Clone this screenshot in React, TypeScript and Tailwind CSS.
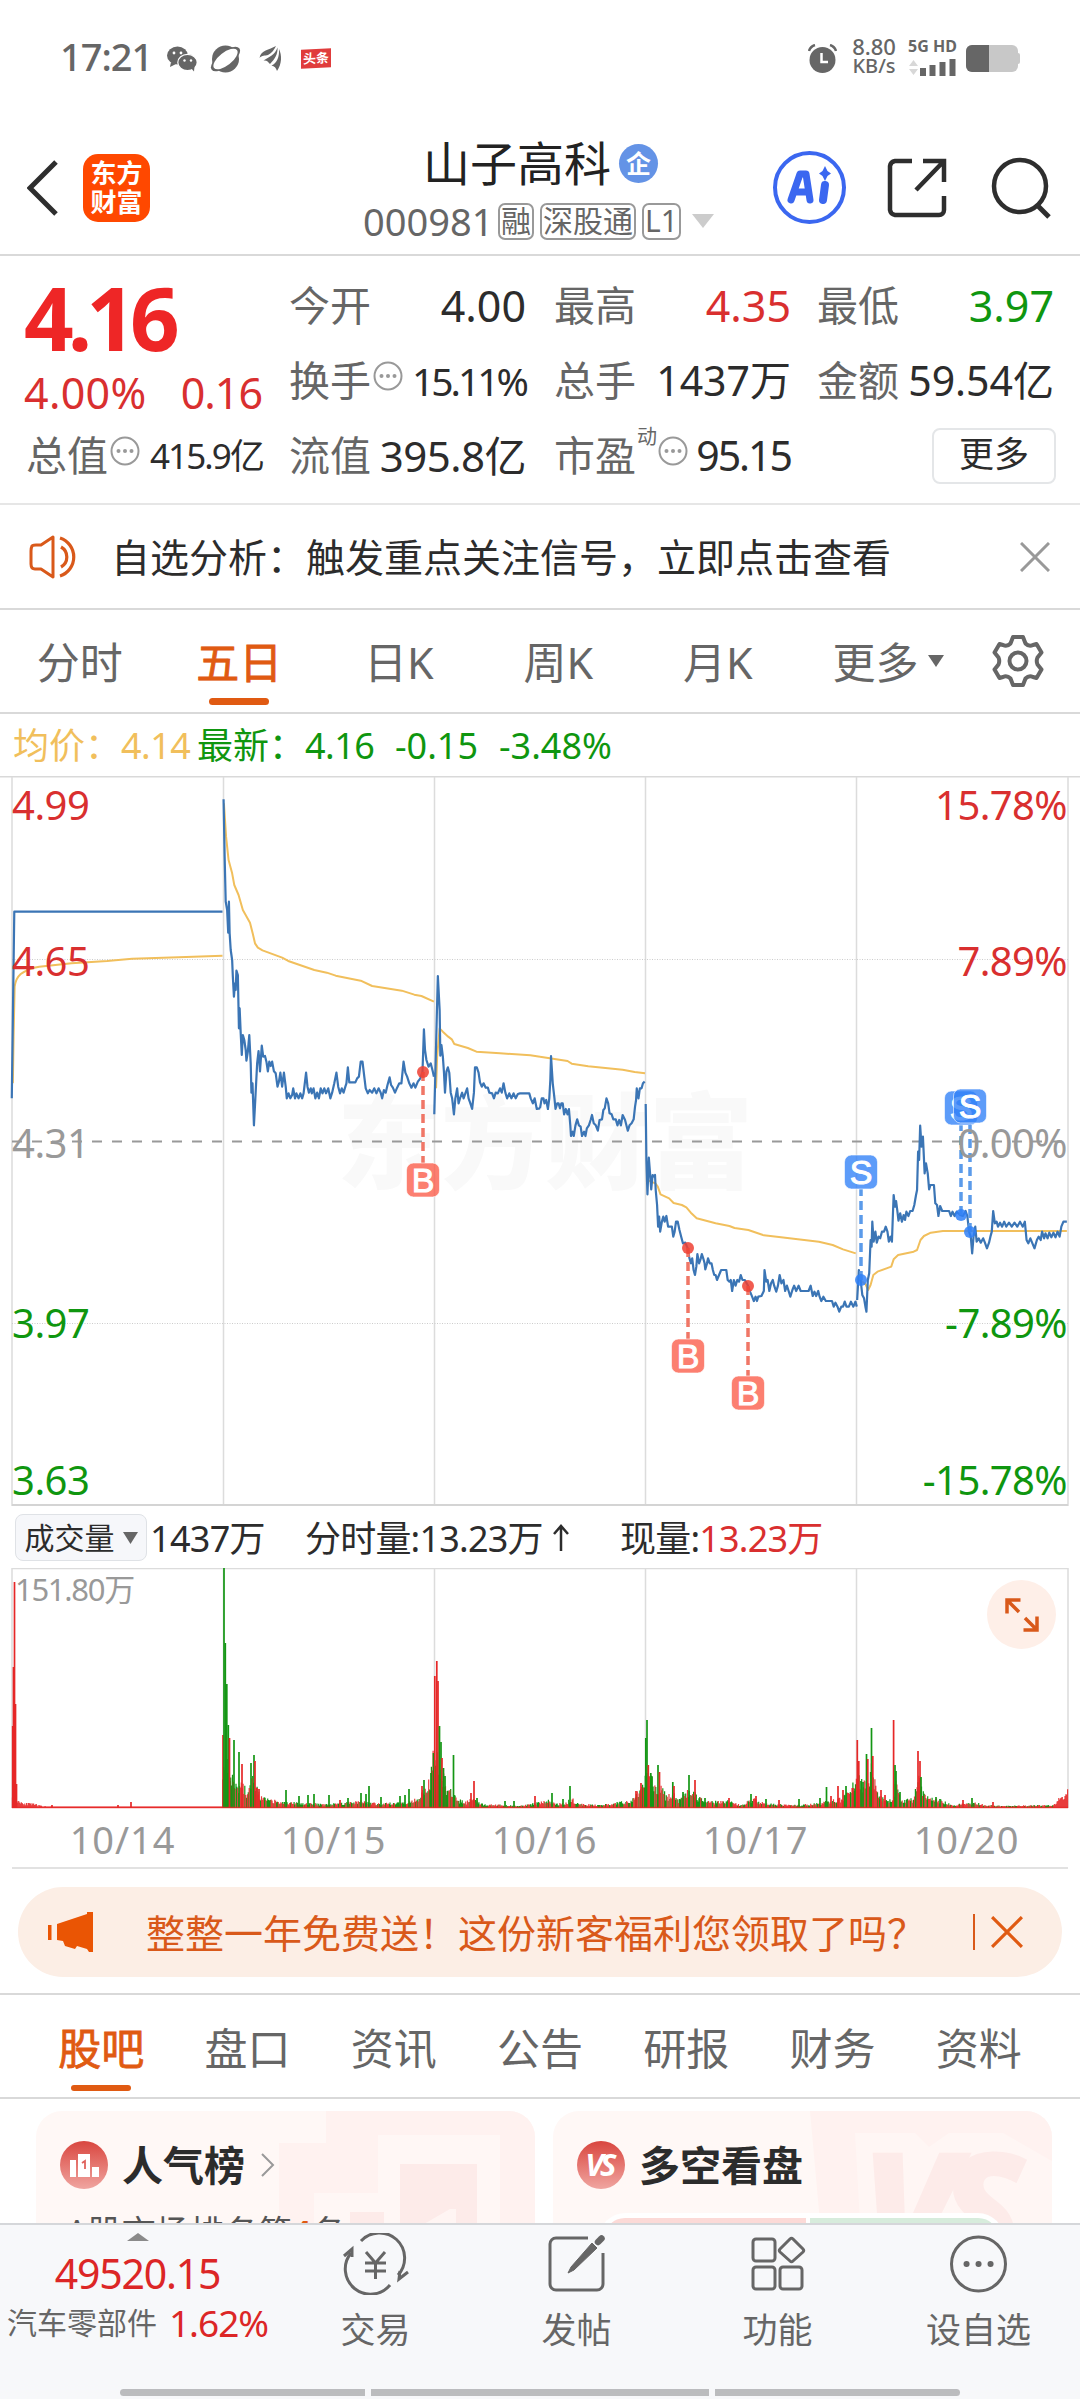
import React from 'react';

type Tone = 'up' | 'down' | 'plain';

const toneClass: Record<Tone, string> = {
    up: 'text-[#d92f2f]',
    down: 'text-[#0f960f]',
    plain: 'text-[#2c2c2c]',
};

/* ---------- Icons ---------- */

const InfoDot = () => (
    <svg width="30" height="30" viewBox="0 0 30 30" className="shrink-0">
        <circle cx="15" cy="15" r="13.5" fill="none" stroke="#999" strokeWidth="2" />
        <circle cx="8.5" cy="15" r="2" fill="#999" />
        <circle cx="15" cy="15" r="2" fill="#999" />
        <circle cx="21.5" cy="15" r="2" fill="#999" />
    </svg>
);

const Triangle = ({ w, h, color, up }: { w: number; h: number; color: string; up?: boolean }) => (
    <svg width={w} height={h} viewBox="0 0 10 10" preserveAspectRatio="none" className="shrink-0">
        <path d={up ? 'M0 10H10L5 0Z' : 'M0 0H10L5 10Z'} fill={color} />
    </svg>
);

const Cross = ({ size, color }: { size: number; color: string }) => (
    <svg width={size} height={size} viewBox="0 0 30 30" className="shrink-0">
        <path d="M1 1L29 29M29 1L1 29" stroke={color} strokeWidth="3" />
    </svg>
);

/* ---------- Status bar ---------- */

const StatusBar = () => (
    <div className="flex h-[117px] items-center pl-[60px] pr-[60px] text-[#666]">
        <span className="-mt-[5px] w-[107px] text-[38px] font-medium leading-none tracking-[-1px]">17:21</span>
        <svg width="30" height="26" viewBox="0 0 30 26">
            <ellipse cx="10.5" cy="9.5" rx="10.5" ry="9" fill="#666" />
            <path d="M4 16L3 21L9 18Z" fill="#666" />
            <ellipse cx="20.5" cy="16.5" rx="9.7" ry="8.2" fill="#666" stroke="#fff" strokeWidth="1.2" />
            <path d="M24 22L27 25.5L27.5 20Z" fill="#666" />
            <circle cx="7" cy="7" r="1.4" fill="#fff" />
            <circle cx="14" cy="7" r="1.4" fill="#fff" />
            <circle cx="17.5" cy="14.5" r="1.2" fill="#fff" />
            <circle cx="24" cy="14.5" r="1.2" fill="#fff" />
        </svg>
        <svg width="32" height="28" viewBox="0 0 32 28" className="ml-[13px]">
            <circle cx="15.5" cy="14" r="13.5" fill="#666" />
            <ellipse cx="15.5" cy="14" rx="17.5" ry="7.5" transform="rotate(-38 15.5 14)" fill="#666" />
            <ellipse cx="15.5" cy="14" rx="14.5" ry="6.5" transform="rotate(-38 15.5 14)" fill="#fff" />
        </svg>
        <svg width="24" height="26" viewBox="0 0 24 26" className="ml-[17px]">
            <path d="M17 0C10 4 2 4 .5 12C3 9 6 10 9 9C13 7 15 4 17 0ZM18.500 1.500C16 9 10 11 4.500 14.500C8 14 9 16 11 18C16 13 19 8 18.500 1.500ZM20 3C20.500 11 18 17 12.500 19.500C15.500 20 17 22 18 25C23 18 23 9 20 3Z" fill="#666" />
        </svg>
        <span className="ml-[18px] flex h-[19px] w-[30px] -skew-y-3 items-center justify-center bg-[#e03c3c] text-[13px] font-bold leading-none text-white">头条</span>

        <svg width="29" height="30" viewBox="0 0 29 30" className="ml-auto">
            <circle cx="14.5" cy="16" r="13" fill="#666" />
            <path d="M1 7A9 9 0 0 1 7 1M28 7A9 9 0 0 0 22 1" stroke="#666" strokeWidth="2.5" fill="none" />
            <path d="M13.5 9V18H20" stroke="#fff" strokeWidth="2.5" fill="none" />
        </svg>
        <div className="-mt-[6px] ml-[11px] flex w-[52px] flex-col items-center text-[22px] font-medium leading-[19px]">
            <span>8.80</span>
            <span className="text-[20px]">KB/s</span>
        </div>
        <div className="-mt-[4px] ml-[8px] flex w-[50px] flex-col">
            <span className="whitespace-nowrap text-[16px] font-bold leading-[16px]">5G HD</span>
            <svg width="50" height="18" viewBox="0 0 50 18" className="mt-[4px]">
                <path d="M1 8L5.5 2L10 8ZM1 11L5.5 17L10 11Z" fill="#d8d8d8" />
                <path d="M15 10V18M24.5 7V18M34.5 4V18M44.5 1V18" stroke="#666" strokeWidth="6" />
            </svg>
        </div>
        <svg width="54" height="27" viewBox="0 0 54 27" className="ml-[8px]">
            <rect width="52" height="27" rx="6" fill="#c8c8c8" />
            <rect x="50" y="8" width="4" height="11" rx="2" fill="#c8c8c8" />
            <path d="M6 0H23V27H6A6 6 0 0 1 0 21V6A6 6 0 0 1 6 0Z" fill="#666" />
        </svg>
    </div>
);

/* ---------- Header ---------- */

const Tag = ({ children }: { children: React.ReactNode }) => (
    <span className="flex h-[37px] items-center rounded-[7px] border-2 border-[#999] px-[1px] text-[30px] leading-none">{children}</span>
);

const Header = () => (
    <div className="flex h-[139px] items-center border-b-2 border-[#d9d9d9] pl-[27px] pr-[29px]">
        <svg width="32" height="56" viewBox="0 0 32 56" className="mt-[4px]">
            <path d="M29 2L3 28L29 54" fill="none" stroke="#2e2e2e" strokeWidth="5" />
        </svg>
        <div className="ml-[24px] mt-[4px] flex h-[68px] w-[67px] flex-col items-center justify-center rounded-[15px] bg-[#ff4800] text-[26px] font-bold leading-[29px] text-white">
            <span>东方</span>
            <span>财富</span>
        </div>
        <div className="ml-[213px] mt-[13px] flex w-[351px] flex-col">
            <div className="ml-[60px] flex h-[46px] items-center gap-[8px]">
                <span className="whitespace-nowrap text-[47px] leading-none text-[#222]">山子高科</span>
                <span className="flex h-[39px] w-[39px] items-center justify-center rounded-full bg-[#6493e6] text-[25px] font-bold leading-none text-white">企</span>
            </div>
            <div className="mt-[12px] flex h-[46px] items-center gap-[6px] whitespace-nowrap text-[#666]">
                <span className="w-[129px] text-[38px] leading-none">000981</span>
                <Tag>融</Tag>
                <Tag>深股通</Tag>
                <Tag>L1</Tag>
                <span className="ml-[5px]"><Triangle w={22} h={14} color="#ccc" /></span>
            </div>
        </div>
        <div className="ml-auto mt-[4px] flex items-center">
            <svg width="73" height="73" viewBox="0 0 73 73">
                <circle cx="36.5" cy="36.5" r="34.5" fill="none" stroke="#3b67f0" strokeWidth="4" />
                <path d="M18 49L27 23H33L37 49M22 41H35" fill="none" stroke="#3b67f0" strokeWidth="7" strokeLinecap="round" strokeLinejoin="round" />
                <path d="M52 34L50 49" stroke="#3b67f0" strokeWidth="8" strokeLinecap="round" />
                <path d="M52 15L54.5 20L58 22.5L54.5 25L52 30L49.5 25L46 22.5L49.5 20Z" fill="#3b67f0" />
            </svg>
            <svg width="60" height="60" viewBox="0 0 60 60" className="ml-[41px]">
                <path d="M25 3H8A6 6 0 0 0 3 8V52A6 6 0 0 0 8 57H52A5 5 0 0 0 57 52V38" fill="none" stroke="#2e2e2e" strokeWidth="4.5" />
                <path d="M36 3H57V24M57 3L29 32" fill="none" stroke="#2e2e2e" strokeWidth="4.5" />
            </svg>
            <svg width="60" height="62" viewBox="0 0 60 62" className="ml-[44px]">
                <circle cx="29" cy="29" r="26" fill="none" stroke="#2e2e2e" strokeWidth="4.5" />
                <path d="M46 48L58 60" stroke="#2e2e2e" strokeWidth="5" />
            </svg>
        </div>
    </div>
);

/* ---------- Quote board ---------- */

interface QuoteProps {
    label: string;
    value: string;
    tone?: Tone;
    info?: boolean;
    sup?: string;
    size?: string;
}

const Quote = ({ label, value, tone = 'plain', info, sup, size = 'text-[43px]' }: QuoteProps) => (
    <div className="flex h-[75px] w-[237px] items-center whitespace-nowrap">
        <span className="text-[41px] leading-none text-[#666]">{label}</span>
        {sup && <span className="-mr-[1px] -mt-[38px] ml-[1px] text-[20px] leading-none text-[#666]">{sup}</span>}
        {info && <span className="-mt-[10px] ml-[2px] flex"><InfoDot /></span>}
        <span className={`ml-auto leading-none ${size} ${toneClass[tone]}`}>{value}</span>
    </div>
);

const QuoteBoard = () => (
    <div className="flex h-[249px] border-b-2 border-[#e6e6e6] pl-[26px] pt-[12px]">
        <div className="w-[263px]">
            <div className="-ml-[2px] flex h-[99px] items-center text-[87px] font-bold leading-none tracking-[-6px] text-[#ee2626]">4.16</div>
            <div className="-ml-[2px] flex h-[51px] w-[238px] items-center justify-between text-[43px] leading-none tracking-[-1px] text-[#d92f2f]">
                <span className="tracking-[0.3px]">4.00%</span>
                <span>0.16</span>
            </div>
            <Quote label="总值" value="415.9亿" info size="text-[35px] tracking-[-1.9px]" />
        </div>
        <div className="w-[265px]">
            <Quote label="今开" value="4.00" />
            <Quote label="换手" value="15.11%" info size="text-[39px] tracking-[-3px]" />
            <Quote label="流值" value="395.8亿" size="text-[42px] tracking-[-0.5px]" />
        </div>
        <div className="w-[263px]">
            <Quote label="最高" value="4.35" tone="up" />
            <Quote label="总手" value="1437万" size="text-[41px]" />
            <Quote label="市盈" value="95.15" info sup="动" size="text-[41px] tracking-[-2px]" />
        </div>
        <div>
            <Quote label="最低" value="3.97" tone="down" />
            <Quote label="金额" value="59.54亿" size="text-[41px]" />
            <div className="flex h-[75px] w-[239px] items-center justify-end">
                <button className="h-[56px] w-[124px] rounded-[8px] border-2 border-[#e4e6e8] pb-[4px] text-[35px] leading-none text-[#2c2c2c]">更多</button>
            </div>
        </div>
    </div>
);

const Notice = () => (
    <div className="flex h-[105px] items-center border-b-2 border-[#d9d9d9] pl-[29px] pr-[30px]">
        <svg width="53" height="44" viewBox="0 0 53 44">
            <path d="M3 11Q2 13 2 16V29Q2 34 6 34H12L24 42V2L12 10H7Q3 10 3 11Z" fill="none" stroke="#d9591a" strokeWidth="3" strokeLinejoin="round" />
            <path d="M32 12A11.5 11.5 0 0 1 32 32M31 3A20 20 0 0 1 31 41" fill="none" stroke="#d9591a" strokeWidth="3.2" />
        </svg>
        <span className="ml-[29px] text-[39px] leading-none text-[#2c2c2c]">自选分析：触发重点关注信号，立即点击查看</span>
        <span className="ml-auto"><Cross size={30} color="#999" /></span>
    </div>
);

/* ---------- Period tabs ---------- */

const periods = ['分时', '五日', '日K', '周K', '月K'];

const PeriodTabs = () => (
    <div className="flex h-[104px] items-center border-b-2 border-[#d9d9d9]">
        {periods.map((p) => (
            <div key={p} className={`relative flex h-full w-[159.5px] items-center justify-center pt-[3px] text-[43px] leading-none ${p === '五日' ? 'text-[#e05a12] [-webkit-text-stroke:0.8px]' : 'text-[#666]'}`}>
                {p}
                {p === '五日' && <span className="absolute bottom-[7px] h-[7px] w-[60px] rounded-full bg-[#e05a12]" />}
            </div>
        ))}
        <div className="ml-[35px] flex items-center gap-[9px] pt-[3px] text-[43px] leading-none text-[#666]">
            更多
            <span className="-mt-[4px] flex"><Triangle w={16} h={12} color="#666" /></span>
        </div>
        <svg width="54" height="54" viewBox="0 0 54 54" className="ml-[47px]">
            <path d="M22 3H32L34.5 9.5Q38 13 42 11L45.5 10L50.5 18.5L46.5 23.5Q45 27 46.5 30.5L50.5 35.5L45.5 44L42 43Q38 41 34.5 44.5L32 51H22L19.5 44.5Q16 41 12 43L8.5 44L3.5 35.5L7.5 30.5Q9 27 7.5 23.5L3.5 18.5L8.5 10L12 11Q16 13 19.5 9.5Z" fill="none" stroke="#666" strokeWidth="4" strokeLinejoin="round" />
            <circle cx="27" cy="27" r="8.5" fill="none" stroke="#666" strokeWidth="4" />
        </svg>
    </div>
);

/* ---------- Price chart ---------- */

// Curves are stored in fine integer units, each group is scaled down to the plot.
const PRICE_A =
    'M33 985L40 425H623' +
    'M626 88L629 260 632 395 636 420 639 488 641 395 643 490 646 540 650 570 652 620 655 680 658 640 660 660 662 602 666 615 669 775 671 715 674 790 677 855 680 795 684 810 688 840 690 872 694 845 698 795 702 880 704 968 707 940 711 1066 715 985 720 880 724 843 728 904 733 827 737 860 742 858 746 875 750 904 754 875 758 888 762 875 767 904 772 910 777 950 781 935 785 908 790 950 795 908 800 950 803 985 808 970 813 985 818 975 821 955 826 985 830 970 836 985 841 970 846 985 850 970 857 908 861 950 865 968 870 955 873 970 878 955 883 985 888 968 893 985 898 955 903 970 908 955 913 970 919 955 925 985 930 968 936 940 942 908 947 950 952 970 957 955 962 968 967 950 970 940 974 892 978 937 995 937 1000 925 1005 920 1010 875 1015 875 1020 920 1024 955 1030 970 1035 960 1042 968 1048 955 1054 970 1060 955 1066 968 1070 985 1075 960 1080 968 1085 945 1091 922 1095 945 1100 953 1106 968 1112 953 1118 940 1124 940 1130 875 1135 908 1140 920 1146 940 1152 953 1158 940 1163 953 1170 935 1177 925 1183 905 1187 778 1190 840 1194 870 1200 890 1206 880 1212 905 1215 920' +
    'M1216 1033L1220 870 1223 740 1226 618 1231 720 1233 857 1236 825 1240 860 1243 905 1246 968 1250 905 1254 892 1258 908 1262 968 1266 985 1271 1033 1275 985 1280 955 1284 1000 1288 985 1294 968 1298 985 1303 970 1308 955 1312 985 1317 1000 1322 1017 1327 968 1330 892 1335 892 1340 908 1344 937 1349 950 1354 940 1360 953 1366 953 1370 968 1378 970 1383 985 1388 968 1394 970 1400 955 1405 968 1410 940 1415 968 1420 985 1426 970 1432 985 1438 970 1444 985 1450 972 1456 970H1482L1486 985 1492 1000 1497 985 1503 1017 1512 1015';
const PRICE_B =
    'M0 1015L5 985 10 985 13 1000 18 990 23 1017 27 985 30 930 32 858 37 940 42 985 45 1017 50 1000 54 1000 58 1015 62 1000 66 1000 70 1033 75 1017 80 1033 84 1017 88 1066 90 1098 95 1085 98 1098 103 1066 108 1048 113 1066 118 1070 122 1098 128 1085 132 1098 136 1075 142 1066 147 1050 151 1035 156 1060 162 1066 168 1082 173 1050 180 1048 184 1020 188 1015 193 985 198 1000 202 1030 208 1033 213 1048 220 1048 225 1066 230 1050 235 1066 240 1035 247 1050 255 1082 260 1066 266 1060 272 1048 276 1010 279 990 281 955 286 985 290 955 295 955 299 940 304 935';
const PRICE_C =
    'M307 72L309 240 312 343 314 290 316 233 320 285 323 328 327 285 331 290 334 285 336 330 340 375 343 440 346 410 349 455 354 425 358 410 362 425 367 408 372 440 378 440 383 440 387 470 391 455 395 425 400 425 405 450 410 470 415 490 422 488 429 505 434 535 438 550 442 535 446 570 450 585 454 560 457 522 462 550 467 535 470 522 474 535 478 550 480 568 485 550 488 535 493 550 498 550 502 570 506 585 510 585 514 600 520 585 526 570 541 570 545 600 550 605 554 600 558 633 563 600 568 617 573 600 578 605 583 585 588 600 595 600 603 615 610 635 616 650 621 663 626 650 630 663 634 650 643 648 650 633 652 570 657 605 661 600 666 633 671 610 676 600 680 617 686 635 691 617 696 585 701 610 707 600 712 633 717 617 722 633 727 650 733 630 738 617 744 633 751 617 757 633 780 633 786 617 792 648 797 635 802 648 808 633 812 650 817 663 823 650 830 663H848L853 680 858 668 864 680 869 695 875 680 880 680 885 665 890 680 897 680 903 665 910 680 916 665 920 680' +
    'M921 660L926 570 931 600 936 645 941 655 945 680 948 695 952 600 956 580 960 480 963 500 965 425 969 485 974 455 978 488 983 470 988 475 993 455 999 455 1004 440 1009 455 1013 485 1018 470 1022 485 1025 400 1027 345 1031 380 1034 363 1038 395 1041 422 1046 400 1051 425 1056 405 1060 420 1064 395 1070 408 1075 393 1082 393 1087 375 1092 345 1095 330 1098 215 1101 240 1104 137 1108 200 1112 170 1117 280 1121 250 1126 280 1130 328 1134 315 1144 315 1148 370 1153 375 1157 408 1162 378 1168 393 1188 393 1193 408 1198 395 1204 408 1210 395 1220 405 1228 408 1236 393 1241 408 1246 455 1251 470 1255 520 1259 470 1264 440 1268 485 1274 475 1280 488 1287 475 1292 488 1298 505 1304 488 1308 470 1312 455 1316 393 1321 430 1326 425 1330 440 1336 428 1342 440 1348 425 1354 440 1362 428 1370 440 1378 428 1386 440 1394 425 1402 440 1408 425 1413 480 1418 490 1424 475 1430 490 1436 505 1443 480 1448 470 1454 480 1458 455 1464 475 1468 460 1474 475 1479 458 1485 472 1491 458 1497 472 1503 455 1509 470 1514 440 1520 425H1530';
const AVG_A =
    'M36 940L38 800 41 650Q44 625 58 612 80 595 110 590L200 580 300 573 370 566 500 562 623 557' +
    'M627 100L633 200 640 270 650 310 656 345 668 375 680 420 700 458 708 492 714 520 722 533 735 541 790 563 807 573 880 600 915 608 940 617 1010 632 1042 648 1125 662 1160 674 1180 678 1215 695' +
    'M1221 955L1224 860 1231 775 1240 785 1255 800 1265 808 1272 822 1310 834 1334 845 1400 850 1485 856 1512 860';
const AVG_B = 'M0 860L80 873 92 881 140 889 240 899 275 906 305 910';
const AVG_C =
    'M310 300L335 310 342 320 350 343 375 355 388 369 412 375 425 382 438 398 455 415 510 430 550 438 565 444 605 450 650 466 700 472 810 485 850 495 880 508 917 520' +
    'M921 600L926 590 935 605 945 612 953 630 960 615 968 585 980 575 1020 560 1027 538 1040 525 1085 515 1095 510 1105 480 1115 468 1135 458 1170 453H1530';

const GROUPS = [
    { transform: 'translate(0 -6) scale(.35714 .33333)', price: PRICE_A, avg: AVG_A },
    { transform: 'translate(540 -6) scale(.34435 .33333)', price: PRICE_B, avg: AVG_B },
    { transform: 'translate(540 304) scale(.34435 .33333)', price: PRICE_C, avg: AVG_C },
];

interface Marker {
    kind: 'B' | 'S';
    x: number;
    dot: number;
    box: number;
    boxX?: number;
}

const markers: Marker[] = [
    { kind: 'B', x: 423, dot: 296, box: 404 },
    { kind: 'B', x: 688, dot: 472, box: 580 },
    { kind: 'B', x: 748, dot: 510, box: 617 },
    { kind: 'S', x: 861, dot: 504, box: 396 },
    { kind: 'S', x: 961, dot: 439, box: 332 },
    { kind: 'S', x: 970, dot: 456, box: 330 },
];

const DAY_X = [223.5, 434.5, 645.5, 856.5];

const MarkerMark = ({ kind, x, dot, box }: Marker) => {
    const fill = kind === 'B' ? '#fb5b48' : '#2f80f7';
    return (
        <g>
            <path d={`M${x} ${dot}V${kind === 'B' ? box - 17 : box + 17}`} stroke={kind === 'B' ? '#f07666' : '#5b9bea'} strokeWidth="3.5" strokeDasharray="9 5" />
            <circle cx={x} cy={dot} r="6" fill={kind === 'B' ? '#ee3f33' : '#2f80f7'} fillOpacity="0.85" />
            <rect x={x - 16.5} y={box - 17} width="33" height="34" rx="7" fill={fill} fillOpacity="0.78" stroke="#fff" strokeOpacity="0.6" />
            <text x={x} y={box + 12} textAnchor="middle" fontSize="34" stroke="#fff" strokeWidth="1" fill="#fff" className="font-['Liberation_Sans',sans-serif]">{kind}</text>
        </g>
    );
};

const leftAxis: [string, string, number][] = [
    ['4.99', '#d92f2f', 44],
    ['4.65', '#d92f2f', 200],
    ['4.31', '#999', 382],
    ['3.97', '#0f960f', 562],
    ['3.63', '#0f960f', 719],
];
const rightAxis: [string, string, number][] = [
    ['15.78%', '#d92f2f', 44],
    ['7.89%', '#d92f2f', 200],
    ['0.00%', '#999', 382],
    ['-7.89%', '#0f960f', 562],
    ['-15.78%', '#0f960f', 719],
];

const PriceChart = () => (
    <svg width="1080" height="731" viewBox="0 0 1080 731" className="block font-['Noto_Sans','Noto_Sans_CJK_SC',sans-serif]">
        <text x="337" y="405" fontSize="104" fontWeight="900" fill="#f9f9f9">东方财富</text>
        <path d="M0 .75H1080" stroke="#d9d9d9" strokeWidth="1.5" />
        <path d={`M12 1V730M1068 1V730${DAY_X.map((x) => `M${x} 1V730`).join('')}`} stroke="#dcdcdc" strokeWidth="1.5" />
        <path d="M12 729H1068" stroke="#d4d4d4" strokeWidth="2" />
        <path d="M12 183.5H1068M12 547.5H1068" stroke="#ccc" strokeDasharray="1 1.5" />
        <path d="M12 365.5H1068" stroke="#999" strokeWidth="2" strokeDasharray="10 10" />
        {GROUPS.map((g) => (
            <g key={g.transform} transform={g.transform} fill="none" strokeLinejoin="round">
                <path d={g.avg} stroke="#f1bf5c" strokeWidth="2" vectorEffect="non-scaling-stroke" />
                <path d={g.price} stroke="#3b75b5" strokeWidth="2.2" vectorEffect="non-scaling-stroke" />
            </g>
        ))}
        {markers.map((m) => <MarkerMark key={m.x} {...m} />)}
        {leftAxis.map(([t, c, y]) => <text key={t} x="12" y={y} fontSize="40" letterSpacing="-0.5" fill={c}>{t}</text>)}
        {rightAxis.map(([t, c, y]) => <text key={t} x="1067" y={y} fontSize="40" letterSpacing="-0.6" textAnchor="end" fill={c}>{t}</text>)}
    </svg>
);

/* ---------- Volume chart ---------- */

const RED = '#e62727';
const GREEN = '#149614';

// [x, height] control points of the ordinary turnover level
const floor: [number, number][] = [
    [12, 20], [18, 8], [24, 5], [34, 4], [42, 2], [60, 1], [222, 1], [223, 55], [230, 36], [236, 28], [244, 22], [248, 14], [252, 32], [256, 22],
    [260, 12], [266, 9], [280, 6], [300, 5], [330, 4], [360, 7], [380, 4], [405, 6], [418, 10], [423, 20], [430, 26], [434, 60], [440, 50],
    [446, 22], [452, 15], [460, 8], [466, 6], [474, 11], [482, 4], [520, 2], [536, 5], [550, 8], [556, 4], [566, 5], [572, 10], [578, 4], [600, 3], [622, 6],
    [634, 9], [640, 20], [645, 30], [650, 32], [656, 22], [660, 26], [666, 12], [674, 15], [678, 7], [688, 18], [696, 14], [704, 6], [730, 7], [740, 3],
    [754, 9], [766, 4], [800, 3], [820, 5], [840, 9], [850, 16], [856, 32], [862, 26], [867, 34], [872, 40], [878, 13], [892, 8], [896, 26], [901, 7],
    [914, 9], [918, 38], [922, 20], [928, 10], [944, 7], [954, 3], [974, 6], [985, 3], [1004, 2], [1054, 3], [1058, 8], [1068, 20],
];

const spikes: [number, number, 'r' | 'g'][] = [
    [12.7, 82, 'r'], [13.5, 141, 'r'], [14.5, 226, 'r'], [15.5, 104, 'r'], [16.5, 24, 'r'], [52, 3, 'r'], [118, 3, 'r'], [131, 6, 'r'],
    [223, 73, 'r'], [224, 240, 'g'], [225.3, 165, 'g'], [226.8, 124, 'g'], [228.3, 83, 'g'], [229.5, 70, 'r'], [234, 68, 'g'], [239, 56, 'g'], [242, 44, 'r'],
    [251, 45, 'g'], [254, 53, 'g'], [255, 47, 'r'], [257, 20, 'r'], [259, 19, 'r'], [286, 18, 'g'], [299, 12, 'g'], [308, 13, 'g'], [314, 14, 'g'],
    [329, 13, 'g'], [340, 8, 'r'], [348, 10, 'g'], [361, 15, 'g'], [366, 14, 'g'], [369, 22, 'g'], [381, 11, 'g'], [400, 12, 'g'], [405, 13, 'g'], [409, 19, 'g'],
    [422, 22, 'r'], [424, 28, 'g'], [431, 35, 'g'], [433.5, 55, 'g'], [434.8, 132, 'r'], [436.8, 147, 'r'], [438, 127, 'r'], [439.5, 82, 'g'], [441, 66, 'g'],
    [442, 50, 'r'], [443.5, 40, 'g'], [445, 32, 'g'], [453.5, 53, 'g'], [471, 15, 'r'], [474, 27, 'r'], [477, 10, 'g'], [505, 7, 'g'], [514, 7, 'g'], [535, 12, 'r'],
    [552, 15, 'g'], [563, 9, 'g'], [570, 22, 'g'], [636, 17, 'r'], [641, 25, 'r'], [645.8, 70, 'g'], [647, 88, 'g'], [648.3, 43, 'r'], [650.8, 35, 'g'],
    [658, 43, 'g'], [659.5, 36, 'r'], [672.8, 26, 'g'], [674, 22, 'r'], [683, 16, 'g'], [689, 33, 'g'], [695, 28, 'r'], [705, 10, 'g'], [729, 10, 'r'],
    [751, 14, 'g'], [756, 12, 'r'], [766, 9, 'g'], [779, 8, 'r'], [799, 9, 'g'], [820, 10, 'g'], [826.5, 21, 'g'], [831, 12, 'r'], [838, 22, 'r'], [843, 18, 'r'],
    [846, 22, 'g'], [853, 20, 'r'], [857.3, 68, 'r'], [858.8, 47, 'r'], [861, 27, 'g'], [863, 26, 'g'], [866.5, 54, 'g'], [867.8, 49, 'r'], [871.5, 80, 'g'],
    [872.8, 52, 'r'], [881, 18, 'r'], [885, 13, 'r'], [893.6, 88, 'r'], [895, 43, 'g'], [896, 37, 'g'], [900, 16, 'g'], [918, 57, 'r'], [920, 47, 'r'],
    [921, 31, 'g'], [936, 11, 'g'], [940, 9, 'g'], [963, 8, 'r'], [972, 10, 'g'], [993, 6, 'r'],
];

const level = (x: number) => {
    let i = 1;
    while (i < floor.length - 1 && floor[i][0] < x) i++;
    const [x0, h0] = floor[i - 1];
    const [x1, h1] = floor[i];
    return h0 + ((h1 - h0) * (x - x0)) / (x1 - x0);
};

const buildBars = () => {
    let seed = 11;
    let red = '';
    let green = '';
    for (let x = 12.5; x < 1068; x += 0.88) {
        seed = (seed * 16807) % 2147483647;
        const a = seed / 2147483647;
        seed = (seed * 16807) % 2147483647;
        const b = seed / 2147483647;
        const h = Math.max(1.5, level(x) * (0.55 + a * 0.6));
        const bar = `M${x.toFixed(1)} 240V${(240 - h).toFixed(1)}`;
        if (x < 222 || x > 1054 || b > 0.5) red += bar;
        else green += bar;
    }
    return { red, green };
};

const VolumeChart = () => {
    const bars = buildBars();
    return (
        <div className="relative h-[241px]">
            <svg width="1080" height="241" viewBox="0 0 1080 241" className="block font-['Noto_Sans','Noto_Sans_CJK_SC',sans-serif]">
                <path d={`M12 .5H1068M12 0V240M1068 0V240${DAY_X.map((x) => `M${x} 0V240`).join('')}`} stroke="#dcdcdc" strokeWidth="1.5" fill="none" />
                <text x="15" y="33" fontSize="31" letterSpacing="-1.3" fill="#999">151.80万</text>
                <path d={bars.green} stroke={GREEN} strokeWidth="1.2" />
                <path d={bars.red} stroke={RED} strokeWidth="1.2" strokeOpacity="0.9" />
                {spikes.map(([x, h, c], i) => (
                    <path key={i} d={`M${x} 240V${240 - h}`} stroke={c === 'r' ? RED : GREEN} strokeWidth="1.7" />
                ))}
                <path d="M12 239.5H1068" stroke={RED} strokeWidth="1.5" strokeOpacity="0.8" />
            </svg>
            <span className="absolute left-[987px] top-[12px] flex h-[69px] w-[69px] items-center justify-center rounded-full bg-[#feefe8]">
                <svg width="34" height="34" viewBox="0 0 34 34">
                    <path d="M2 15.5V2H15.5M2 2L14 14M32 18.5V32H18.5M32 32L20 20" fill="none" stroke="#d9591a" strokeWidth="3.5" />
                </svg>
            </span>
        </div>
    );
};

const dates = ['10/14', '10/15', '10/16', '10/17', '10/20'];

const ChartPanel = () => (
    <div>
        <div className="flex h-[62px] items-center whitespace-nowrap pl-[13px] pt-[2px] text-[36px] leading-none">
            <span className="w-[184px] text-[#f1bf5c]">均价：<span className="tracking-[-0.5px]">4.14</span></span>
            <span className="flex text-[#0f960f]">
                <span className="w-[198px]">最新：<span className="tracking-[-0.5px]">4.16</span></span>
                <span className="w-[104px]">-0.15</span>
                <span>-3.48%</span>
            </span>
        </div>
        <PriceChart />
        <div className="flex h-[61px] items-center whitespace-nowrap pl-[15px] text-[36px] leading-none text-[#2c2c2c]">
            <span className="flex h-[47px] w-[132px] items-center justify-center gap-[8px] rounded-[8px] border border-[#dfe2e6] bg-[#f6f7fa] text-[30px]">
                成交量
                <Triangle w={15} h={12} color="#666" />
            </span>
            <span className="ml-[3px] w-[155px] pt-[2px] tracking-[-0.7px]">1437万</span>
            <span className="w-[246px] pt-[2px] tracking-[-0.8px]">分时量:13.23万</span>
            <svg width="16" height="28" viewBox="0 0 16 28" className="ml-[2px]">
                <path d="M8 27V2M1 10L8 2L15 10" fill="none" stroke="#2c2c2c" strokeWidth="2.5" />
            </svg>
            <span className="ml-[51px] pt-[2px] tracking-[-0.8px]">现量:<span className="text-[#d92f2f]">13.23万</span></span>
        </div>
        <VolumeChart />
        <div className="mx-[12px] flex h-[60px] items-center border-b-2 border-[#e2e2e2] pl-[5px] pt-[2px]">
            {dates.map((d) => (
                <span key={d} className="w-[211px] shrink-0 text-center text-[38px] leading-none tracking-[0.9px] text-[#999]">{d}</span>
            ))}
        </div>
    </div>
);

/* ---------- Promo + info tabs ---------- */

const Promo = () => (
    <div className="h-[126px] border-b-2 border-[#d9d9d9] px-[18px] pt-[18px]">
        <div className="flex h-[90px] items-center rounded-[45px] bg-[#fceee5] pl-[29px] pr-[39px]">
            <svg width="47" height="40" viewBox="0 0 47 40">
                <path d="M1 13H4.5V28H1ZM10 12L40 2V0H46V40H42L40 37L30 34L28 37L18 34L16 29L10 28Z" fill="#ea5504" />
            </svg>
            <span className="ml-[52px] whitespace-nowrap text-[39px] leading-none text-[#d9591a]">整整一年免费送！这份新客福利您领取了吗？</span>
            <span className="ml-auto h-[36px] w-[2px] bg-[#d9591a]" />
            <span className="ml-[16px]"><Cross size={32} color="#e05a12" /></span>
        </div>
    </div>
);

const infoTabs = ['股吧', '盘口', '资讯', '公告', '研报', '财务', '资料'];

const InfoTabs = () => (
    <div className="flex h-[104px] border-b-2 border-[#d9d9d9] px-[28px]">
        {infoTabs.map((t, i) => (
            <div key={t} className={`relative flex h-full flex-1 items-center justify-center pt-[4px] text-[43px] leading-none ${i === 0 ? 'text-[#e05a12] [-webkit-text-stroke:0.8px]' : 'text-[#666]'}`}>
                {t}
                {i === 0 && <span className="absolute bottom-[6px] h-[6px] w-[60px] rounded-full bg-[#e05a12]" />}
            </div>
        ))}
    </div>
);

/* ---------- Cards ---------- */

const Cards = () => (
    <div className="flex h-[124px] gap-[18px] overflow-hidden pl-[36px] pt-[12px]">
        <div className="relative h-[200px] w-[499px] shrink-0 overflow-hidden rounded-[26px] bg-[#fff8f6]">
            <svg width="499" height="200" viewBox="0 0 499 200" className="absolute inset-0">
                <path d="M290 0H499V200H243V32H290Z" fill="#fff2f0" />
                <path d="M278 82H342V24H464V200H278Z" fill="#fff7f5" />
                <path d="M314 101H348V200H314ZM364 53H441V200H364Z" fill="#fdebe9" />
                <path d="M388 113L414 98H420V200H400V118L388 122Z" fill="#fff5f3" />
            </svg>
            <div className="relative flex h-[108px] items-center pl-[24px]">
                <svg width="48" height="48" viewBox="0 0 48 48">
                    <defs>
                        <linearGradient id="badge" x1="0" y1="0" x2="0" y2="1">
                            <stop offset="0" stopColor="#d9463f" />
                            <stop offset="1" stopColor="#f0a5a0" />
                        </linearGradient>
                    </defs>
                    <circle cx="24" cy="24" r="24" fill="url(#badge)" />
                    <path d="M10 19H16V36H10ZM18 13H30V36H18ZM32 26H39V36H32Z" fill="#fff" />
                    <path d="M22 22L25 20V28" stroke="#e0645e" strokeWidth="1.8" fill="none" />
                </svg>
                <span className="ml-[14px] text-[41px] font-bold leading-none text-[#2c2c2c]">人气榜</span>
                <svg width="15" height="24" viewBox="0 0 15 24" className="ml-[15px]">
                    <path d="M2 1L13 12L2 23" fill="none" stroke="#999" strokeWidth="2" />
                </svg>
            </div>
            <div className="relative -mt-[4px] pl-[30px] text-[34px] leading-none text-[#555]">
                A股市场排名第<b className="text-[#e05a12]">4</b>名
            </div>
        </div>
        <div className="relative h-[200px] w-[499px] shrink-0 overflow-hidden rounded-[26px] bg-[#fff8f6]">
            <svg width="499" height="200" viewBox="0 0 499 200" className="absolute inset-0 font-['Noto_Sans',sans-serif]">
                <path d="M257 0H499V200H275Z" fill="#fff2f0" />
                <path d="M302 22H362L376 36L396 22H450L499 50V200H312Z" fill="#fff6f4" />
                <text x="308" y="156" fontSize="160" fontWeight="900" fontStyle="italic" fill="#fdebe9" letterSpacing="-22">VS</text>
            </svg>
            <div className="relative flex h-[108px] items-center pl-[24px]">
                <svg width="48" height="48" viewBox="0 0 48 48" className="font-['Noto_Sans',sans-serif]">
                    <circle cx="24" cy="24" r="24" fill="url(#badge)" />
                    <text x="22" y="35" fontSize="31" fontWeight="bold" fontStyle="italic" letterSpacing="-3.5" textAnchor="middle" fill="#fff">VS</text>
                </svg>
                <span className="ml-[14px] text-[41px] font-bold leading-none text-[#2c2c2c]">多空看盘</span>
            </div>
            <div className="relative -mt-[6px] ml-[46px] flex h-[60px] w-[405px] gap-[4px] overflow-hidden rounded-[26px] border-[5px] border-white/80 bg-white">
                <span className="w-[202px] bg-[#fcdad7]" />
                <span className="flex-1 bg-[#d7ecdc]" />
            </div>
        </div>
    </div>
);

/* ---------- Bottom bar ---------- */

const navItems = [
    {
        label: '交易',
        icon: (
            <>
                <path d="M19 8A25 25 0 0 1 56 42M48 52A25 25 0 0 1 9 20" />
                <path d="M2 23L10 16V24M58 38L57 46L66 39" />
                <path d="M24 19L33.5 30L43 19M23 30H44M23 38H44M33.5 30V46" />
            </>
        ),
    },
    {
        label: '发帖',
        icon: (
            <>
                <path d="M45 5H13A6 6 0 0 0 7 11V51A6 6 0 0 0 13 57H54A6 6 0 0 0 60 51V20" />
                <path d="M49 10L54 15L31 37L25 40L28 34Z" fill="#666" strokeWidth="1" strokeLinejoin="round" />
                <path d="M55 9L58.500 5.500" strokeWidth="6.500" strokeLinecap="round" />
            </>
        ),
    },
    {
        label: '功能',
        icon: (
            <>
                <rect x="9" y="6" width="22" height="22" rx="3" />
                <rect x="9" y="34" width="22" height="22" rx="3" />
                <rect x="36" y="34" width="22" height="22" rx="3" />
                <path d="M46 6Q47.500 4.500 49 6L59 16Q60.500 17.500 59 19L49 28Q47.500 29.500 46 28L36 19Q34.500 17.500 36 16Z" />
            </>
        ),
    },
    {
        label: '设自选',
        icon: (
            <>
                <circle cx="33.5" cy="31" r="27" />
                <path d="M21.5 31H21.6M33.5 31H33.6M45.500 31H45.600" strokeWidth="6" strokeLinecap="round" />
            </>
        ),
    },
];

const BottomBar = () => (
    <div className="flex h-[176px] flex-col border-t-2 border-[#d5d7da] bg-[#f7f8fa]">
        <div className="flex h-[164px]">
            <div className="flex w-[275px] flex-col items-center whitespace-nowrap">
                <span className="mt-[8px] flex"><Triangle w={22} h={8} color="#8a8a8a" up /></span>
                <span className="mt-[12px] text-[41px] leading-none tracking-[-1.2px] text-[#dc2626]">49520.15</span>
                <span className="mt-[10px] flex items-center text-[30px] leading-none text-[#666]">
                    汽车零部件<span className="ml-[12px] text-[37px] tracking-[-1px] text-[#dc2626]">1.62%</span>
                </span>
            </div>
            {navItems.map((n) => (
                <div key={n.label} className="flex w-[201px] flex-col items-center pt-[8px]">
                    <svg width="67" height="62" viewBox="0 0 67 62" fill="none" stroke="#666" strokeWidth="3">{n.icon}</svg>
                    <span className="mt-[17px] text-[35px] leading-none text-[#666]">{n.label}</span>
                </div>
            ))}
        </div>
        <div className="flex gap-[6px] pl-[120px]">
            <span className="h-[7px] w-[245px] rounded-l-full bg-[#bbbcbe]" />
            <span className="h-[7px] w-[338px] bg-[#bbbcbe]" />
            <span className="h-[7px] w-[245px] rounded-r-full bg-[#bbbcbe]" />
        </div>
    </div>
);

export default function App() {
    return (
        <div className="flex h-[2400px] w-[1080px] flex-col overflow-hidden bg-white font-['Noto_Sans','Noto_Sans_CJK_SC',sans-serif]">
            <StatusBar />
            <Header />
            <QuoteBoard />
            <Notice />
            <PeriodTabs />
            <ChartPanel />
            <Promo />
            <InfoTabs />
            <Cards />
            <BottomBar />
        </div>
    );
}
